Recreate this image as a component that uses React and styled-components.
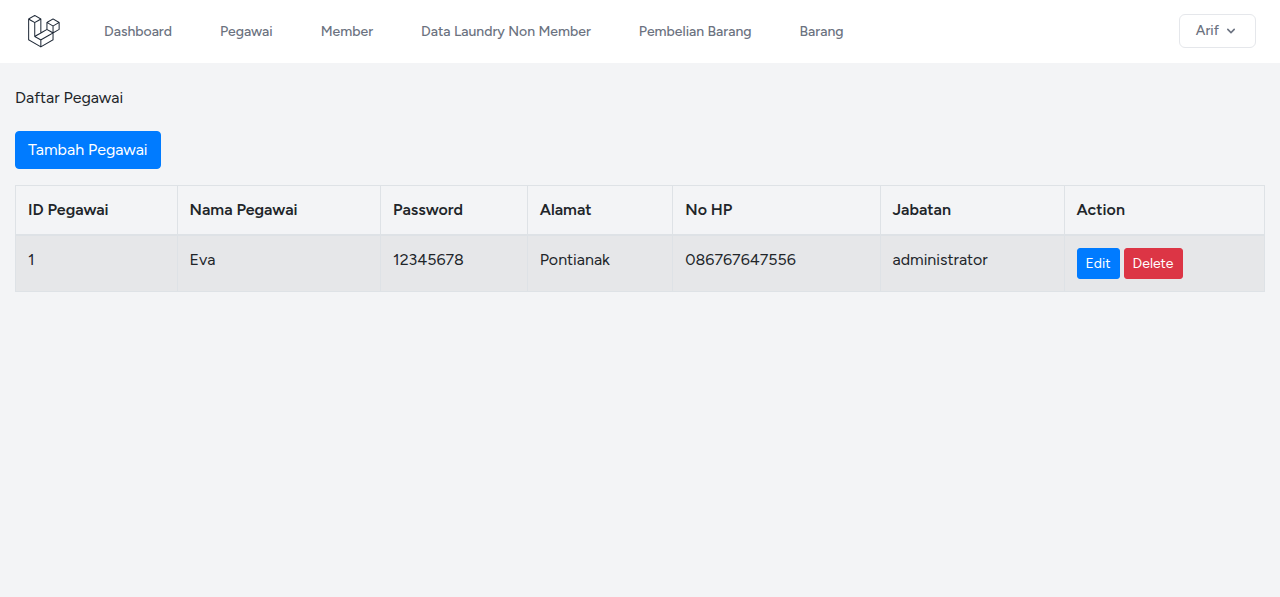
import React from "react";
import styled, { createGlobalStyle } from "styled-components";

const GlobalStyle = createGlobalStyle`
  *, *::before, *::after { box-sizing: border-box; }
  body {
    margin: 0;
    background: #f3f4f6;
    color: #212529;
    font-family: Figtree, Lato, "Liberation Sans", sans-serif;
    font-size: 16px;
    line-height: 24px;
  }
`;

const NavBar = styled.nav`
  display: flex;
  align-items: center;
  padding: 14px 24px 15px;
  background: #fff;
`;

const LogoLink = styled.a`
  display: flex;
  justify-content: center;
  width: 40px;
  margin-right: 40px;
  color: #1f2937;
`;

const NavLinks = styled.div`
  display: flex;
  gap: 48px;
`;

const NavLink = styled.a`
  padding-top: 4px;
  border-bottom: 2px solid transparent;
  color: #6b7280;
  font-size: 14px;
  font-weight: 500;
  line-height: 20px;
  text-decoration: none;
  white-space: nowrap;
`;

const UserButton = styled.button`
  display: flex;
  align-items: center;
  gap: 4px;
  height: 34px;
  margin-left: auto;
  padding: 0 16px;
  border: 1px solid #e5e7eb;
  border-radius: 6px;
  background: #fff;
  color: #6b7280;
  font: inherit;
  font-size: 14px;
  font-weight: 500;
  line-height: 20px;
`;

const Content = styled.main`
  padding: 23px 15px;
`;

const Title = styled.h1`
  margin: 0 0 21px;
  font-size: inherit;
  font-weight: 400;
`;

const Button = styled.button`
  padding: ${(p) => (p.$small ? "4px 8px" : "6px 12px")};
  border: 1px solid ${(p) => (p.$danger ? "#dc3545" : "#007bff")};
  border-radius: ${(p) => (p.$small ? "3px" : "4px")};
  background: ${(p) => (p.$danger ? "#dc3545" : "#007bff")};
  color: #fff;
  font: inherit;
  font-size: ${(p) => (p.$small ? "14px" : "16px")};
  line-height: ${(p) => (p.$small ? "21px" : "24px")};
`;

const Actions = styled.div`
  display: flex;
  gap: 4px;
`;

const Table = styled.table`
  width: 100%;
  margin-top: 16px;
  border: 1px solid #dee2e6;
  border-collapse: collapse;
`;

const HeadCell = styled.th`
  padding: 12px;
  border: 1px solid #dee2e6;
  border-bottom-width: 2px;
  font-weight: 600;
  text-align: left;
`;

const Row = styled.tr`
  background: ${(p) => (p.$striped ? "rgba(0, 0, 0, 0.05)" : "transparent")};
`;

const Cell = styled.td`
  padding: 12px;
  border: 1px solid #dee2e6;
  vertical-align: top;
`;

const links = ["Dashboard", "Pegawai", "Member", "Data Laundry Non Member", "Pembelian Barang", "Barang"];

const columns = [
  { label: "ID Pegawai", key: "id" },
  { label: "Nama Pegawai", key: "name" },
  { label: "Password", key: "password" },
  { label: "Alamat", key: "address" },
  { label: "No HP", key: "phone" },
  { label: "Jabatan", key: "role" },
];

const employees = [
  { id: "1", name: "Eva", password: "12345678", address: "Pontianak", phone: "086767647556", role: "administrator" },
];

function Logo() {
  return (
    <svg width="32" height="33" viewBox="0 0 50 52" fill="currentColor" fillRule="evenodd" aria-hidden="true">
      <path d="M49.626 11.564a.809.809 0 0 1 .028.209v10.972a.8.8 0 0 1-.402.694l-9.209 5.302V39.25c0 .286-.152.55-.4.694L20.42 51.01c-.044.025-.092.041-.14.058-.018.006-.035.017-.054.022a.805.805 0 0 1-.41 0c-.022-.006-.042-.018-.063-.026-.044-.016-.09-.03-.132-.054L.402 39.944A.801.801 0 0 1 0 39.25V6.334c0-.072.01-.142.028-.21.006-.023.02-.044.028-.067.015-.042.029-.085.051-.124.015-.026.037-.047.055-.071.023-.032.044-.065.071-.093.023-.023.053-.04.079-.06.029-.024.055-.05.088-.069h.001l9.61-5.533a.802.802 0 0 1 .8 0l9.61 5.533h.002c.032.02.059.045.088.068.026.02.055.038.078.06.028.029.048.062.072.094.017.024.04.045.054.071.023.04.036.082.052.124.008.023.022.044.028.068a.809.809 0 0 1 .028.209v20.559l8.008-4.611v-10.51c0-.07.01-.141.028-.208.007-.024.02-.045.028-.068.016-.042.03-.085.052-.124.015-.026.037-.047.054-.071.024-.032.044-.065.072-.093.023-.023.052-.04.078-.06.03-.024.056-.05.088-.069h.001l9.611-5.533a.801.801 0 0 1 .8 0l9.61 5.533c.034.02.06.045.09.068.025.02.054.038.077.06.028.029.048.062.072.094.018.024.04.045.054.071.023.039.036.082.052.124.009.023.022.044.028.068zm-1.574 10.718v-9.124l-3.363 1.936-4.646 2.675v9.124l8.01-4.611zm-9.61 16.505v-9.13l-4.57 2.61-13.05 7.448v9.216l17.62-10.144zM1.602 7.719v31.068L19.22 48.93v-9.214l-9.204-5.209-.003-.002-.004-.002c-.031-.018-.057-.044-.086-.066-.025-.02-.054-.036-.076-.058l-.002-.003c-.026-.025-.044-.056-.066-.084-.02-.027-.044-.05-.06-.078l-.001-.003c-.018-.03-.029-.066-.042-.1-.013-.03-.03-.058-.038-.09v-.001c-.01-.038-.012-.078-.016-.117-.004-.03-.012-.06-.012-.09v-.002-21.481L4.965 9.654 1.602 7.72zm8.81-5.994L2.405 6.334l8.005 4.609 8.006-4.61-8.006-4.608zm4.164 28.764l4.645-2.674V7.719l-3.363 1.936-4.646 2.675v20.096l3.364-1.937zM39.243 7.164l-8.006 4.609 8.006 4.609 8.005-4.61-8.005-4.608zm-.801 10.605l-4.646-2.675-3.363-1.936v9.124l4.645 2.674 3.364 1.937v-9.124zM20.02 38.33l11.743-6.704 5.87-3.35-8-4.606-9.211 5.303-8.395 4.833 7.993 4.524z" />
    </svg>
  );
}

function ChevronDown() {
  return (
    <svg width="16" height="16" viewBox="0 0 20 20" fill="currentColor" aria-hidden="true">
      <path
        fillRule="evenodd"
        clipRule="evenodd"
        d="M5.293 7.293a1 1 0 011.414 0L10 10.586l3.293-3.293a1 1 0 111.414 1.414l-4 4a1 1 0 01-1.414 0l-4-4a1 1 0 010-1.414z"
      />
    </svg>
  );
}

export default function App() {
  return (
    <>
      <GlobalStyle />
      <NavBar>
        <LogoLink href="#" aria-label="Laravel">
          <Logo />
        </LogoLink>
        <NavLinks>
          {links.map((label) => (
            <NavLink href="#" key={label}>{label}</NavLink>
          ))}
        </NavLinks>
        <UserButton type="button">
          Arif
          <ChevronDown />
        </UserButton>
      </NavBar>
      <Content>
        <Title>Daftar Pegawai</Title>
        <Button type="button">Tambah Pegawai</Button>
        <Table>
          <thead>
            <tr>
              {columns.map((c) => <HeadCell key={c.key} scope="col">{c.label}</HeadCell>)}
              <HeadCell scope="col">Action</HeadCell>
            </tr>
          </thead>
          <tbody>
            {employees.map((employee, i) => (
              <Row key={employee.id} $striped={i % 2 === 0}>
                {columns.map((c) => <Cell key={c.key}>{employee[c.key]}</Cell>)}
                <Cell>
                  <Actions>
                    <Button type="button" $small>Edit</Button>
                    <Button type="button" $small $danger>Delete</Button>
                  </Actions>
                </Cell>
              </Row>
            ))}
          </tbody>
        </Table>
      </Content>
    </>
  );
}
